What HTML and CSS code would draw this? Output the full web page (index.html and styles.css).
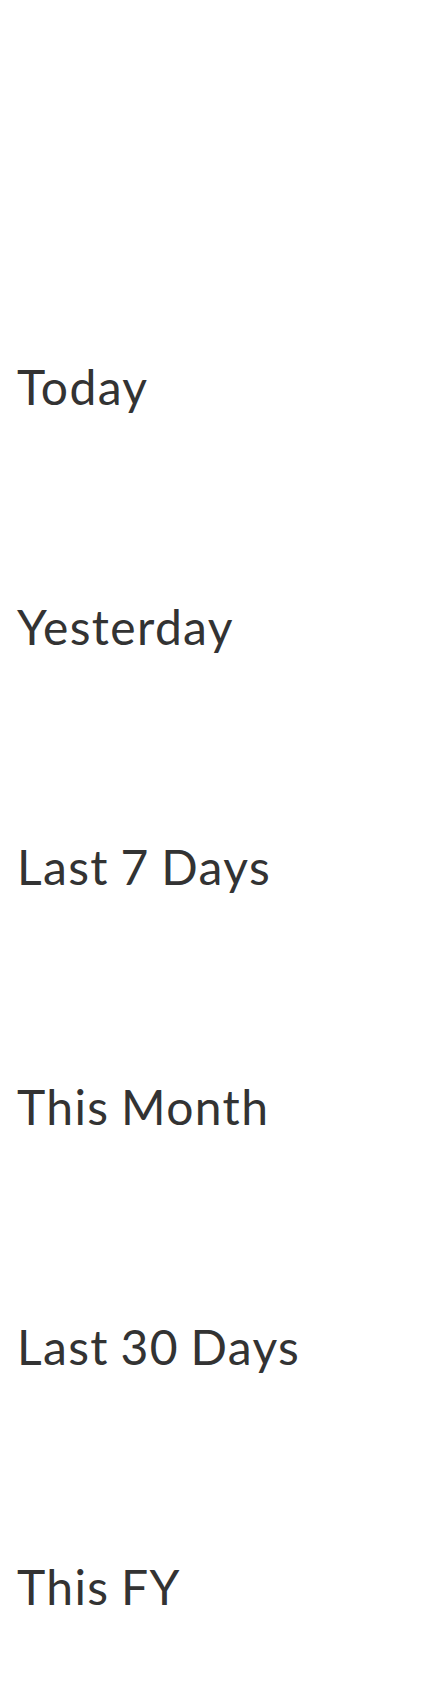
FILE: index.html
```html
<!DOCTYPE html>
<html>
<head>
<meta charset="utf-8">
<link rel="stylesheet" href="styles.css">
</head>
<body>
<ul class="ranges">
  <li class="range">Today</li>
  <li class="range">Yesterday</li>
  <li class="range">Last 7 Days</li>
  <li class="range">This Month</li>
  <li class="range">Last 30 Days</li>
  <li class="range">This FY</li>
</ul>
</body>
</html>
```
FILE: styles.css
```css
html, body {
  margin: 0;
  padding: 0;
  background: #ffffff;
}
body {
  width: 432px;
  height: 1688px;
  overflow: hidden;
  font-family: Lato, "Liberation Sans", sans-serif;
}
.ranges {
  list-style: none;
  margin: 0;
  padding: 267px 0 0 17px;
}
.range {
  height: 240px;
  display: flex;
  align-items: center;
  font-size: 48px;
  line-height: 1;
  letter-spacing: 1.35px;
  word-spacing: -2px;
  color: #333333;
}
```
